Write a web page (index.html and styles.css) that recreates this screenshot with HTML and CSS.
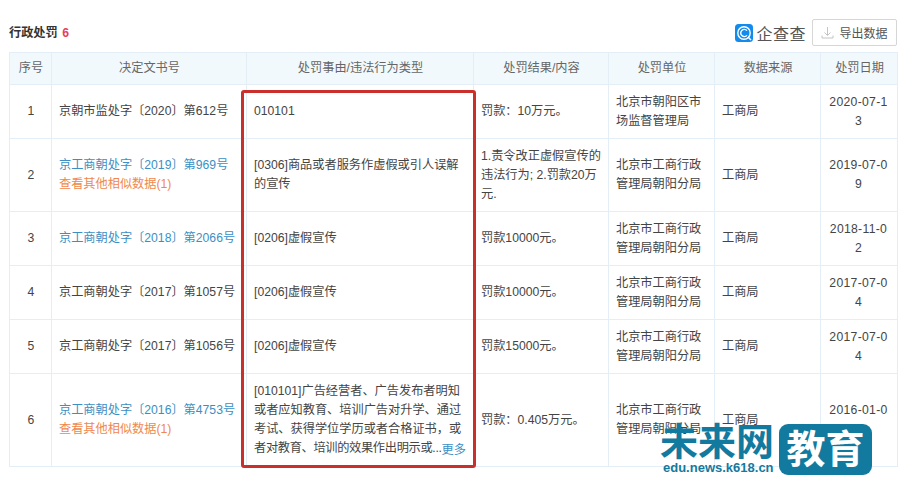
FILE: index.html
```html
<!DOCTYPE html>
<html lang="zh-CN">
<head>
    <meta charset="UTF-8">
    <meta name="viewport" content="width=device-width, initial-scale=1.0">
    <title>行政处罚</title>
    <link rel="stylesheet" href="styles.css">
</head>
<body>
    <div class="page">
        <div class="section-head">
            <h3 class="section-title">行政处罚 <span class="count">6</span></h3>
            <div class="head-tools">
                <div class="logo">
                    <svg class="logo-icon" width="18" height="18" viewBox="0 0 18 18">
                        <rect width="18" height="18" rx="3.5" fill="#128bed"/>
                        <circle cx="9" cy="9" r="6.2" fill="none" stroke="#fff" stroke-width="1.4"/>
                        <path d="M12 6.6a3.6 3.6 0 1 0 0 4.8" fill="none" stroke="#fff" stroke-width="1.4"/>
                        <path d="M13 13l3 3" stroke="#fff" stroke-width="1.4"/>
                    </svg>
                    <span class="logo-text">企查查</span>
                </div>
                <button class="export-btn">
                    <svg width="13" height="13" viewBox="0 0 13 13" fill="none" stroke="#c4c4c4">
                        <path d="M6.5 1v8M3.5 6.5l3 3 3-3M1 9.5v2.5h11V9.5"/>
                    </svg>
                    导出数据
                </button>
            </div>
        </div>

        <table class="penalty-table">
            <colgroup>
                <col class="col-no">
                <col class="col-doc">
                <col class="col-reason">
                <col class="col-result">
                <col class="col-org">
                <col class="col-source">
                <col class="col-date">
            </colgroup>
            <thead>
                <tr>
                    <th>序号</th>
                    <th>决定文书号</th>
                    <th>处罚事由/违法行为类型</th>
                    <th>处罚结果/内容</th>
                    <th>处罚单位</th>
                    <th>数据来源</th>
                    <th>处罚日期</th>
                </tr>
            </thead>
            <tbody>
                <tr class="row-short">
                    <td class="center">1</td>
                    <td>京朝市监处字〔2020〕第612号</td>
                    <td>010101</td>
                    <td>罚款：10万元。</td>
                    <td>北京市朝阳区市场监督管理局</td>
                    <td>工商局</td>
                    <td class="center date">2020-07-13</td>
                </tr>
                <tr class="row-mid">
                    <td class="center">2</td>
                    <td><a class="link">京工商朝处字〔2019〕第969号</a><br><a class="link-more">查看其他相似数据(1)</a></td>
                    <td>[0306]商品或者服务作虚假或引人误解的宣传</td>
                    <td>1.责令改正虚假宣传的违法行为; 2.罚款20万元.</td>
                    <td>北京市工商行政管理局朝阳分局</td>
                    <td>工商局</td>
                    <td class="center date">2019-07-09</td>
                </tr>
                <tr class="row-short">
                    <td class="center">3</td>
                    <td><a class="link">京工商朝处字〔2018〕第2066号</a></td>
                    <td>[0206]虚假宣传</td>
                    <td>罚款10000元。</td>
                    <td>北京市工商行政管理局朝阳分局</td>
                    <td>工商局</td>
                    <td class="center date">2018-11-02</td>
                </tr>
                <tr class="row-short">
                    <td class="center">4</td>
                    <td>京工商朝处字〔2017〕第1057号</td>
                    <td>[0206]虚假宣传</td>
                    <td>罚款10000元。</td>
                    <td>北京市工商行政管理局朝阳分局</td>
                    <td>工商局</td>
                    <td class="center date">2017-07-04</td>
                </tr>
                <tr class="row-short">
                    <td class="center">5</td>
                    <td>京工商朝处字〔2017〕第1056号</td>
                    <td>[0206]虚假宣传</td>
                    <td>罚款15000元。</td>
                    <td>北京市工商行政管理局朝阳分局</td>
                    <td>工商局</td>
                    <td class="center date">2017-07-04</td>
                </tr>
                <tr class="row-tall">
                    <td class="center">6</td>
                    <td><a class="link">京工商朝处字〔2016〕第4753号</a><br><a class="link-more">查看其他相似数据(1)</a></td>
                    <td>[010101]广告经营者、广告发布者明知或者应知教育、培训广告对升学、通过考试、获得学位学历或者合格证书，或<br><span class="more-line">者对教育、培训的效果作出明示或...<a class="link more-link">更多</a></span></td>
                    <td>罚款：0.405万元。</td>
                    <td>北京市工商行政管理局朝阳分局</td>
                    <td>工商局</td>
                    <td class="center date">2016-01-05</td>
                </tr>
            </tbody>
        </table>

        <div class="red-box"></div>

        <div class="watermark">
            <div class="wm-left">
                <div class="wm-name">未来网</div>
                <div class="wm-url">edu.news.k618.cn</div>
            </div>
            <div class="wm-badge">教育</div>
        </div>
    </div>
</body>
</html>
```

FILE: styles.css
```css
body {
    margin: 0;
    background-color: #fff;
    font-family: "Liberation Sans", "Noto Sans CJK SC", sans-serif;
    font-size: 12.2px;
    color: #444;
}

.page {
    position: relative;
    width: 912px;
    height: 485px;
    overflow: hidden;
    padding: 19px 0 0 9px;
    box-sizing: border-box;
}

.section-head {
    display: flex;
    align-items: center;
    justify-content: space-between;
    width: 888px;
    height: 27px;
    margin-bottom: 6px;
}

.section-title {
    margin: 0 0 2px;
    font-size: 12.2px;
    font-weight: bold;
    color: #333;
}

.count {
    margin-left: 1px;
    color: #e8405a;
}

.head-tools {
    display: flex;
    align-items: center;
}

.logo {
    display: flex;
    align-items: center;
    margin-right: 6px;
}

.logo-icon {
    margin-right: 3px;
}

.logo-text {
    font-size: 16px;
    letter-spacing: 0.5px;
    color: #555;
}

.export-btn {
    display: flex;
    align-items: center;
    justify-content: center;
    gap: 5px;
    width: 85px;
    height: 27px;
    padding: 0;
    background-color: #fff;
    border: 1px solid #d6d6d6;
    border-radius: 2px;
    font-family: inherit;
    font-size: 12px;
    color: #555;
}

.penalty-table {
    width: 888px;
    border-collapse: collapse;
    table-layout: fixed;
}

.col-no { width: 42px; }
.col-doc { width: 195px; }
.col-reason { width: 227px; }
.col-result { width: 135px; }
.col-org { width: 106px; }
.col-source { width: 106px; }
.col-date { width: 77px; }

.penalty-table th,
.penalty-table td {
    border: 1px solid #e4eef6;
    padding: 0 6px 0 7px;
    line-height: 19px;
}

.penalty-table th {
    height: 31px;
    background-color: #f2f9fc;
    font-weight: normal;
    text-align: center;
    color: #666;
}

.row-short td { height: 53px; }
.row-mid td { height: 72px; }
.row-tall td { height: 92px; }

.penalty-table .center {
    text-align: center;
}

.penalty-table .date {
    padding: 0 8px 0 7px;
    letter-spacing: 0.3px;
    word-break: break-all;
}

.link {
    color: #3b8fc4;
}

.link-more {
    color: #f0884d;
}

.more-line {
    display: inline-block;
    white-space: nowrap;
    letter-spacing: -0.3px;
}

.more-link {
    position: relative;
    top: 2px;
    letter-spacing: 0;
}

.red-box {
    position: absolute;
    left: 241px;
    top: 90px;
    width: 235px;
    height: 378px;
    box-sizing: border-box;
    border: 3px solid #c9302c;
    border-radius: 3px;
}

.watermark {
    position: absolute;
    left: 660px;
    top: 424px;
    display: flex;
    color: #127a9e;
}

.wm-left {
    width: 120px;
}

.wm-name {
    font-size: 38px;
    line-height: 36px;
    font-weight: bold;
    white-space: nowrap;
}

.wm-url {
    margin-left: 3px;
    font-size: 13px;
    line-height: 16px;
    font-weight: bold;
    white-space: nowrap;
}

.wm-badge {
    width: 93px;
    height: 51px;
    margin-left: -1px;
    background-color: #127a9e;
    border-radius: 9px;
    color: #fff;
    font-size: 39px;
    line-height: 51px;
    font-weight: bold;
    text-align: center;
    white-space: nowrap;
}
```
